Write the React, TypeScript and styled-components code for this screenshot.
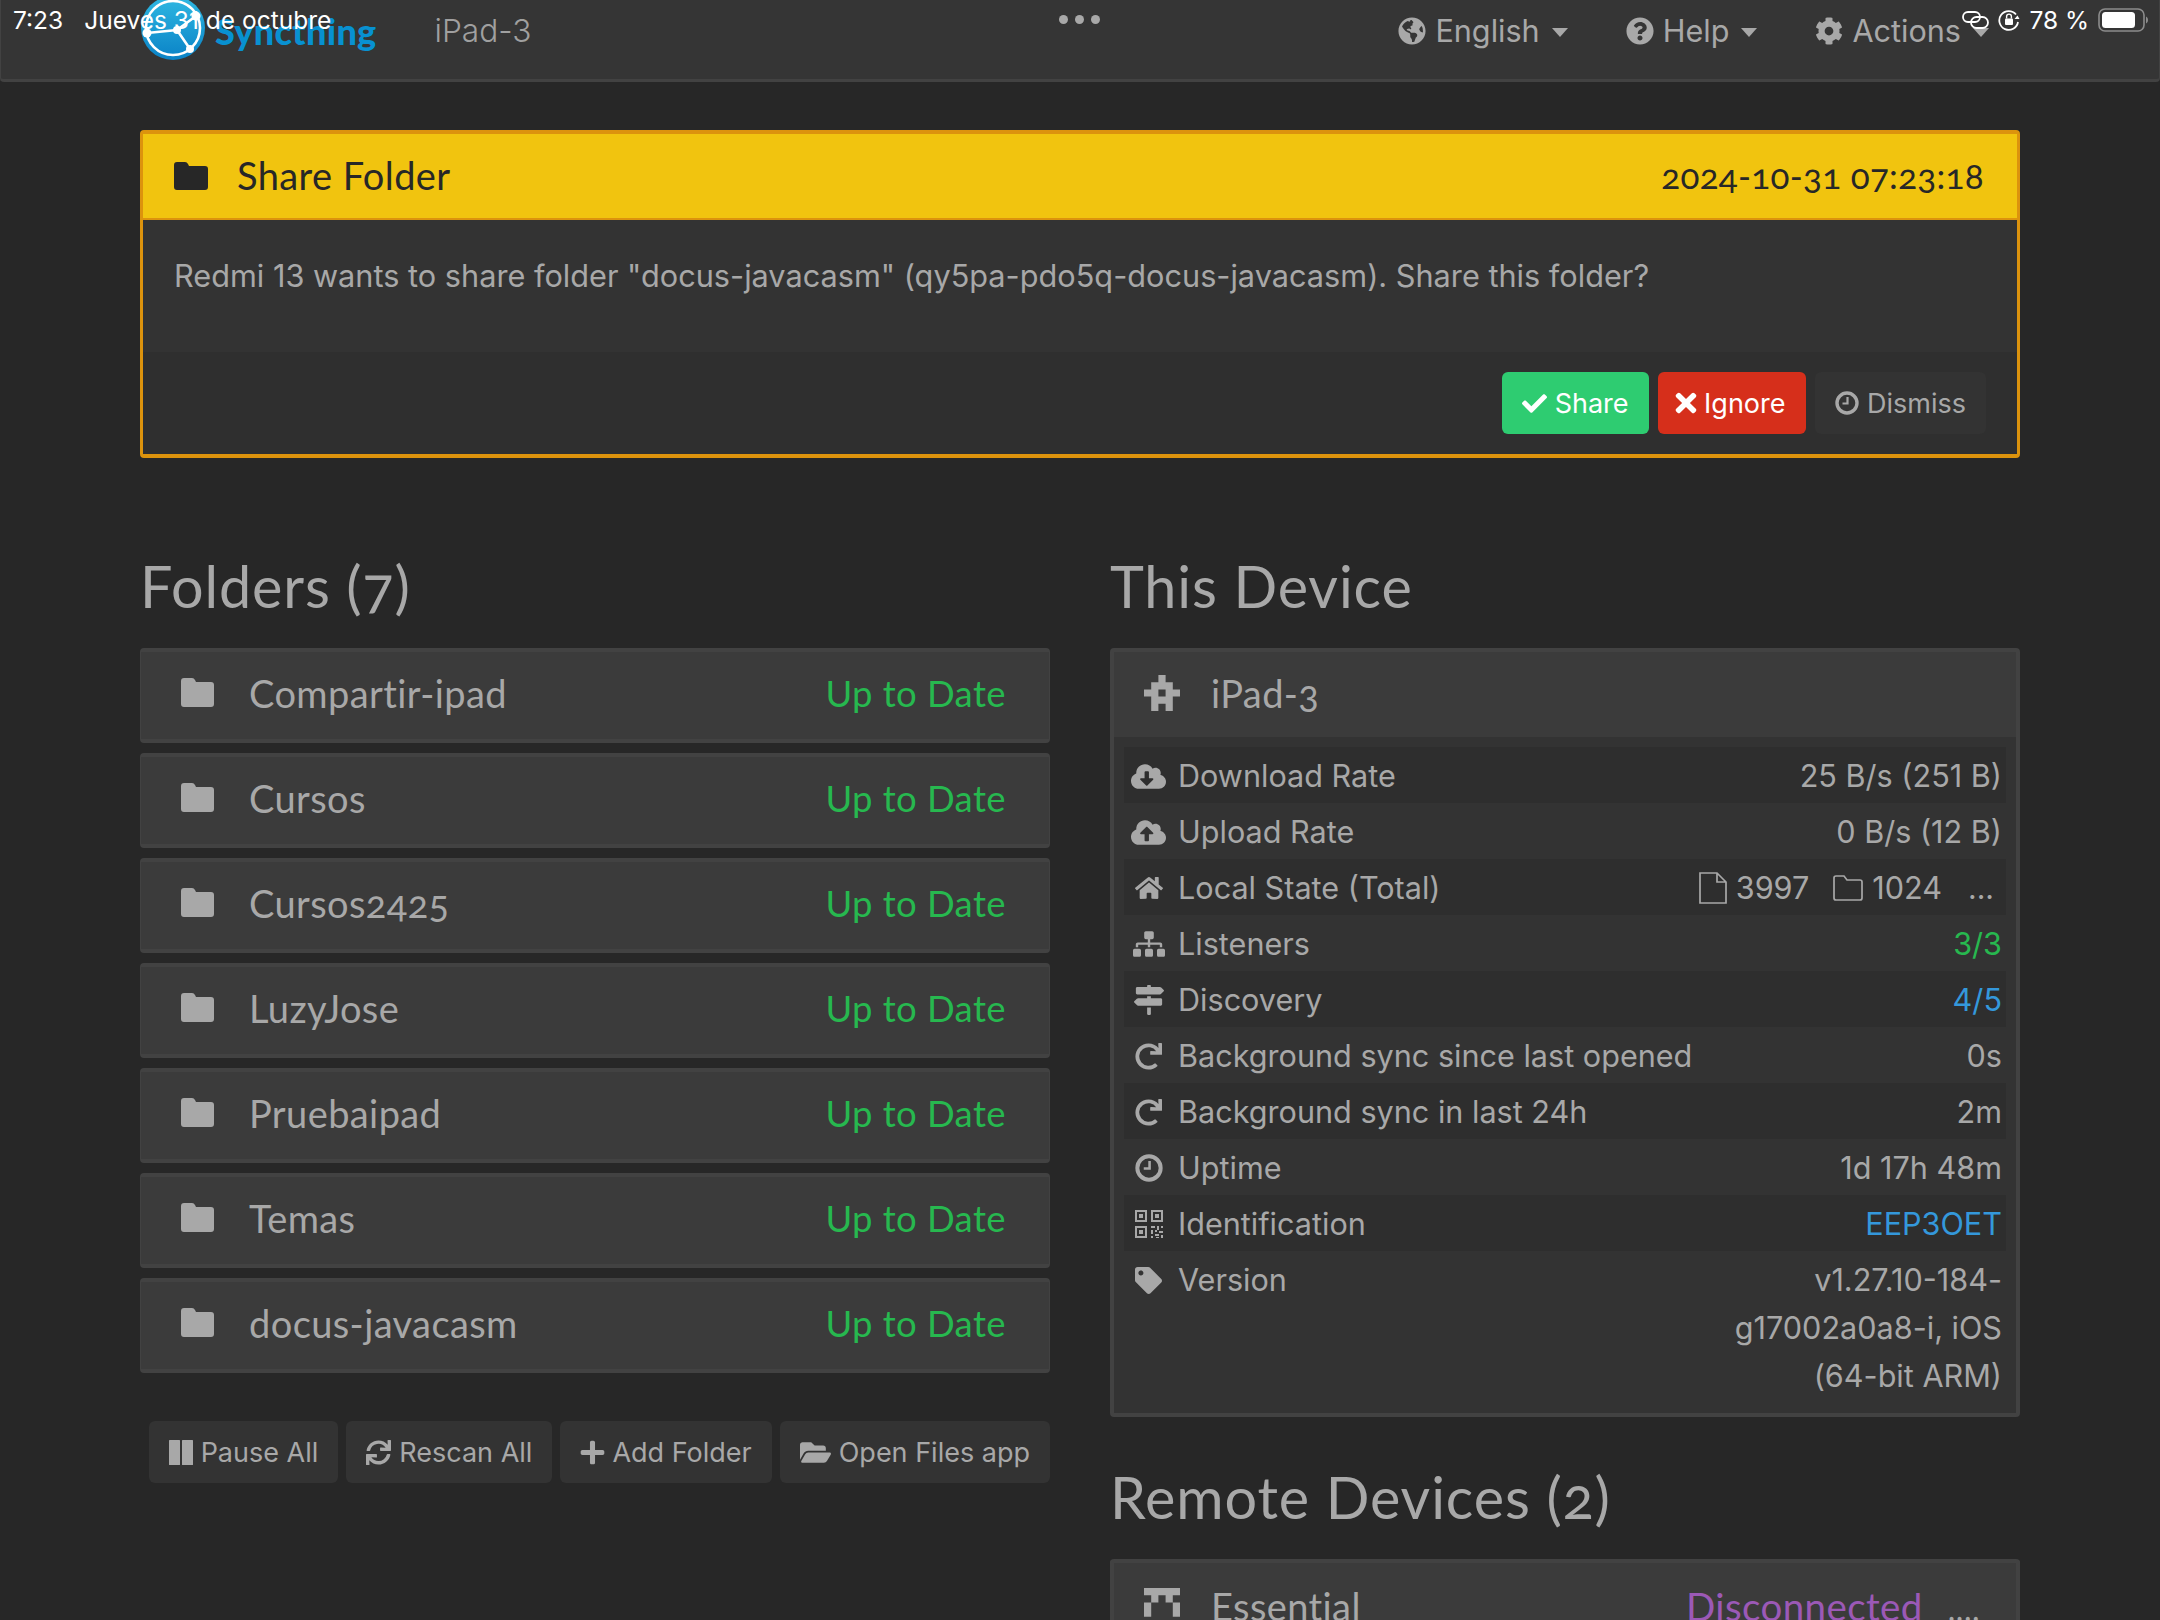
import styled, { createGlobalStyle } from "styled-components";
import {
  FaCheck,
  FaCloudDownloadAlt,
  FaCloudUploadAlt,
  FaCog,
  FaFolderOpen,
  FaGlobeAmericas,
  FaHome,
  FaMapSigns,
  FaPlus,
  FaQuestionCircle,
  FaRedo,
  FaSitemap,
  FaSync,
  FaTag,
  FaTimes,
} from "react-icons/fa";

const GlobalStyle = createGlobalStyle`
  html, body {
    margin: 0;
    padding: 0;
    height: 1620px;
    overflow: hidden;
    background: #272727;
  }
  * {
    box-sizing: border-box;
  }
`;

const Page = styled.div`
  position: relative;
  height: 1620px;
  overflow: hidden;
  background: #272727;
  color: #a8a8a8;
  font-family: Inter, "Liberation Sans", sans-serif;
`;

/* ---- iOS status bar, lies over the navbar ---- */
const StatusLeft = styled.div`
  position: absolute;
  top: 5px;
  left: 13px;
  display: flex;
  gap: 21px;
  color: #fff;
  font-size: 24.5px;
  line-height: 30px;
`;

const StatusRight = styled.div`
  position: absolute;
  top: 5px;
  right: 12px;
  display: flex;
  align-items: center;
  gap: 9px;
  color: #fff;
  font-size: 24.5px;
  line-height: 30px;
`;

const DotsRow = styled.div`
  position: absolute;
  top: 15px;
  left: 1059px;
  display: flex;
  gap: 7px;
`;

const Dot = styled.span`
  width: 9px;
  height: 9px;
  border-radius: 50%;
  background: #a8a8a8;
`;

/* ---- navbar ---- */
const Navbar = styled.nav`
  display: flex;
  align-items: flex-start;
  height: 82px;
  padding: 0 170px 0 140px;
  background: #353535;
  border: 1px solid #424242;
  border-top: 0;
  border-bottom-width: 3px;
  border-radius: 0 0 4px 4px;
`;

const Brand = styled.div`
  display: flex;
  align-items: center;
  height: 60px;
  flex: none;
`;

const LogoMark = styled.svg`
  flex: none;
  margin-top: -4px;
`;

const BrandName = styled.span`
  margin-left: 10px;
  margin-top: 1px;
  color: #0891d1;
  font-family: Lato, sans-serif;
  font-size: 36px;
  font-weight: 900;
  letter-spacing: 0.3px;
`;

const DeviceName = styled.span`
  margin: 11px 0 0 58px;
  font-size: 31.7px;
  line-height: 40px;
  color: #a0a0a0;
  font-weight: 300;
`;

const NavMenu = styled.div`
  display: flex;
  gap: 58px;
  margin-left: auto;
  margin-top: 11px;
`;

const NavItem = styled.span`
  display: flex;
  align-items: center;
  font-size: 30.6px;
  line-height: 40px;
  color: #a8a8a8;
  svg {
    font-size: 28px;
    margin-right: 9px;
  }
`;

const Caret = styled.span`
  width: 0;
  height: 0;
  margin-left: 12px;
  margin-top: 2px;
  border-top: 9px solid #a8a8a8;
  border-left: 8px solid transparent;
  border-right: 8px solid transparent;
`;

/* ---- share folder notification ---- */
const Content = styled.main`
  padding: 48px 140px 0;
`;

const Notice = styled.section`
  height: 328px;
  background: #333;
  border: 3px solid #dc930d;
  border-top-width: 4px;
  border-bottom-width: 4px;
  border-radius: 4px;
  display: flex;
  flex-direction: column;
`;

const NoticeHead = styled.header`
  display: flex;
  align-items: center;
  height: 86px;
  padding: 0 33px 2px 31px;
  background: #f1c40f;
  border-bottom: 2px solid #dc930d;
  color: #272727;
`;

const NoticeTitle = styled.h3`
  margin: 0 0 0 29px;
  font-family: Lato, sans-serif;
  font-size: 38px;
  font-weight: 400;
  letter-spacing: 0.4px;
`;

const NoticeTime = styled.span`
  margin-left: auto;
  font-family: Lato, sans-serif;
  font-size: 35px;
  letter-spacing: 0.3px;
  font-feature-settings: "onum";
`;

const NoticeBody = styled.p`
  flex: 1;
  margin: 0;
  padding: 34px 31px 0;
  font-size: 30.7px;
  line-height: 44px;
  color: #a8a8a8;
`;

const NoticeFoot = styled.footer`
  display: flex;
  justify-content: flex-end;
  gap: 9.5px;
  height: 102px;
  padding: 20px 31px 0;
  background: #2f2f2f;
`;

const Button = styled.button<{ $tone?: "share" | "ignore" | "plain" }>`
  display: inline-flex;
  align-items: center;
  gap: 8px;
  height: 62px;
  padding: 0 20px;
  border: 0;
  border-radius: 6px;
  font-family: inherit;
  font-size: 27px;
  background: ${({ $tone }) =>
    $tone === "share"
      ? "#2ecc71"
      : $tone === "ignore"
        ? "#d62f1b"
        : "#333"};
  color: ${({ $tone }) =>
    $tone === "share" || $tone === "ignore" ? "#fff" : "#a8a8a8"};
`;

const IgnoreIcon = styled(FaTimes)`
  margin: 0 -5px 0 -7px;
`;

const AddIcon = styled(FaPlus)`
  margin: 0 -2px 0 -1px;
`;

/* ---- the two columns ---- */
const Columns = styled.div`
  display: grid;
  grid-template-columns: 910px 910px;
  gap: 60px;
  margin-top: 98px;
`;

const Column = styled.div`
  display: flex;
  flex-direction: column;
`;

const Heading = styled.h1<{ $spaced?: boolean }>`
  margin: ${({ $spaced }) => ($spaced ? "50px 0 32px" : "0 0 32px")};
  font-family: Lato, sans-serif;
  font-size: 57.5px;
  font-weight: 400;
  line-height: 60px;
  color: #a8a8a8;
  letter-spacing: 0.9px;
  font-feature-settings: "onum";
`;

const FolderList = styled.div`
  display: flex;
  flex-direction: column;
  gap: 10px;
`;

const PanelHead = styled.div`
  display: flex;
  align-items: center;
  background: #3b3b3b;
  font-family: Lato, sans-serif;
  font-size: 38px;
  letter-spacing: 0.4px;
  font-feature-settings: "onum";
  color: #a8a8a8;
`;

const FolderRow = styled(PanelHead)`
  height: 95px;
  padding: 0 43px 6px 40px;
  border: 4px solid #424242;
  border-left-width: 1px;
  border-right-width: 1px;
  border-radius: 4px;
`;

const FolderGlyph = styled.svg`
  flex: none;
  fill: currentColor;
`;

const FolderIconSlot = styled.span`
  display: flex;
  width: 33px;
  margin-right: 35px;
`;

const NoticeTitleIcon = styled(FolderGlyph)`
  margin-top: 2px;
`;

const FolderStatus = styled.span`
  margin-left: auto;
  color: #27b84f;
  font-size: 36.5px;
  letter-spacing: 0.4px;
`;

const FolderActions = styled.div`
  display: flex;
  justify-content: flex-end;
  gap: 8px;
  margin-top: 48px;
`;

/* ---- this device ---- */
const DevicePanel = styled.section`
  display: flex;
  flex-direction: column;
  background: #333;
  border: 4px solid #424242;
  border-radius: 4px;
`;

const DeviceHead = styled(PanelHead)`
  height: 85px;
  padding: 0 36px 4px 30px;
`;

const RemotePanel = styled(DevicePanel)`
  border-bottom: 0;
`;

const RemoteHead = styled(DeviceHead)`
  height: 90px;
`;

const Identicon = styled.svg`
  width: 36px;
  height: 36px;
  margin-right: 31px;
  fill: #a8a8a8;
  flex: none;
`;

const StateTable = styled.div`
  padding: 10px;
`;

const StateRow = styled.div`
  display: flex;
  justify-content: space-between;
  align-items: flex-start;
  padding: 5px 4px 3px 7px;
  font-size: 30.6px;
  line-height: 48px;
  &:nth-child(odd) {
    background: #2e2e2e;
  }
`;

const StateLabel = styled.span`
  display: flex;
  align-items: center;
  white-space: nowrap;
`;

const StateIcon = styled.span`
  display: flex;
  justify-content: center;
  width: 35px;
  margin-right: 12px;
`;

const StateValue = styled.span<{ $color?: string }>`
  display: flex;
  align-items: center;
  max-width: 290px;
  text-align: right;
  color: ${({ $color }) => $color ?? "inherit"};
`;

const WideValue = styled.span`
  display: flex;
  align-items: center;
  white-space: nowrap;
`;

const CountGroup = styled.span`
  display: flex;
  align-items: center;
  gap: 9px;
  margin-right: 24px;
`;

const OutlineGlyph = styled.svg`
  flex: none;
  fill: none;
  stroke: currentColor;
  stroke-width: 1.7;
`;

const Ellipsis = styled.span`
  width: 34px;
  margin-left: 2px;
  font-size: 30px;
  text-align: left;
`;

const RemoteStatus = styled.span`
  margin-left: auto;
  color: #9b59b6;
  font-size: 38.5px;
`;

const RemoteExtra = styled.span`
  margin: 4px 0 0 25px;
  font-size: 32px;
  letter-spacing: 0.5px;
`;

const FolderShape = ({ width, height }: { width: number; height: number }) => (
  <path
    d={`M3 0 H11 Q13 0 14 2 L15 4 H${width - 3} Q${width} 4 ${width} 7 V${height - 3} Q${width} ${height} ${width - 3} ${height} H3 Q0 ${height} 0 ${height - 3} V3 Q0 0 3 0 Z`}
  />
);

const ClockIcon = ({ size }: { size: number }) => (
  <svg width={size} height={size} viewBox="0 0 24 24" fill="none" stroke="currentColor">
    <circle cx="12" cy="12" r="10" strokeWidth="3.4" />
    <path d="M12.5 6 V12.5 H7.5" strokeWidth="2.2" />
  </svg>
);

const QrIcon = ({ size }: { size: number }) => (
  <svg width={size} height={size} viewBox="0 0 28 28" fill="currentColor">
    <path
      fillRule="evenodd"
      d="M0 0h12v12H0z M2 2v8h8V2z M4 4h4v4H4z M16 0h12v12H16z M18 2v8h8V2z M20 4h4v4h-4z M0 16h12v12H0z M2 18v8h8v-8z M4 20h4v4H4z"
    />
    <path d="M16 16h4v2h-4z M22 16h2v4h-2z M26 16h2v2h-2z M16 20h2v4h-2z M20 20h2v2h-2z M24 21h4v2h-4z M20 24h4v2h-4z M16 26h2v2h-2z M26 25h2v3h-2z M21 27h3v1h-3z" />
  </svg>
);

const PauseIcon = () => (
  <svg width="24" height="25" viewBox="0 0 24 25" fill="currentColor">
    <rect x="0" y="0" width="11" height="25" rx="0.5" />
    <rect x="13" y="0" width="11" height="25" rx="0.5" />
  </svg>
);

const folders = [
  "Compartir-ipad",
  "Cursos",
  "Cursos2425",
  "LuzyJose",
  "Pruebaipad",
  "Temas",
  "docus-javacasm",
];

const stateRows = [
  { icon: <FaCloudDownloadAlt size={35} />, label: "Download Rate", value: "25 B/s (251 B)" },
  { icon: <FaCloudUploadAlt size={35} />, label: "Upload Rate", value: "0 B/s (12 B)" },
  { icon: <FaHome size={28} />, label: "Local State (Total)", local: true },
  { icon: <FaSitemap size={32} />, label: "Listeners", value: "3/3", color: "#27b84f" },
  { icon: <FaMapSigns size={30} />, label: "Discovery", value: "4/5", color: "#3498db" },
  { icon: <FaRedo size={27} />, label: "Background sync since last opened", value: "0s" },
  { icon: <FaRedo size={27} />, label: "Background sync in last 24h", value: "2m" },
  { icon: <ClockIcon size={28} />, label: "Uptime", value: "1d 17h 48m" },
  { icon: <QrIcon size={28} />, label: "Identification", value: "EEP3OET", color: "#3498db" },
  { icon: <FaTag size={27} />, label: "Version", value: "v1.27.10-184-g17002a0a8-i, iOS (64-bit ARM)" },
];

const Logo = () => (
  <LogoMark width="64" height="64" viewBox="0 0 64 64">
    <defs>
      <linearGradient id="logoFill" x1="0" y1="0" x2="0" y2="1">
        <stop offset="0" stopColor="#2fb8e2" />
        <stop offset="1" stopColor="#0a82c6" />
      </linearGradient>
    </defs>
    <circle cx="32" cy="32" r="32" fill="url(#logoFill)" />
    <circle cx="32" cy="32" r="27" fill="none" stroke="#fff" strokeWidth="2.6" />
    <path
      d="M6 37 L36 34 L55 20 M36 34 L49 53"
      fill="none"
      stroke="#fff"
      strokeWidth="2.6"
    />
    <g fill="#fff">
      <circle cx="6" cy="37" r="4.5" />
      <circle cx="36" cy="34" r="4" />
      <circle cx="55" cy="20" r="4.5" />
      <circle cx="49" cy="53" r="4" />
    </g>
  </LogoMark>
);

const LinkIcon = () => (
  <svg width="27" height="18" viewBox="0 0 27 18" fill="none" stroke="#fff" strokeWidth="1.8">
    <rect x="1" y="1" width="17" height="10" rx="5" />
    <rect x="9" y="6" width="17" height="11" rx="5.5" />
  </svg>
);

const RotationLockIcon = () => (
  <svg width="22" height="22" viewBox="0 0 22 22" fill="none">
    <path d="M18 5.5 A9.4 9.4 0 1 0 20 13" stroke="#fff" strokeWidth="1.8" />
    <path d="M16.5 10 L21.5 10 L19.5 6.5 Z" fill="#fff" />
    <rect x="7" y="9.5" width="8" height="6.5" rx="1" fill="#fff" />
    <path d="M8.6 9.5 V7.5 A2.4 2.4 0 0 1 13.4 7.5 V9.5" stroke="#fff" strokeWidth="1.4" />
  </svg>
);

const BatteryIcon = () => (
  <svg width="50" height="24" viewBox="0 0 50 24">
    <rect x="1" y="1" width="45" height="22" rx="6" fill="none" stroke="#8c8c8c" strokeWidth="1.6" />
    <rect x="4" y="4" width="33" height="16" rx="3.5" fill="#fff" />
    <path d="M48 8.5 C49.5 9.5 50 10.5 50 12 C50 13.5 49.5 14.5 48 15.5 Z" fill="#8c8c8c" />
  </svg>
);

const App = () => {
  return (
    <Page>
      <GlobalStyle />
      <Navbar>
        <Brand>
          <Logo />
          <BrandName>Syncthing</BrandName>
        </Brand>
        <DeviceName>iPad-3</DeviceName>
        <NavMenu>
          <NavItem>
            <FaGlobeAmericas />
            English
            <Caret />
          </NavItem>
          <NavItem>
            <FaQuestionCircle />
            Help
            <Caret />
          </NavItem>
          <NavItem>
            <FaCog />
            Actions
            <Caret />
          </NavItem>
        </NavMenu>
      </Navbar>

      <StatusLeft>
        <span>7:23</span>
        <span>Jueves 31 de octubre</span>
      </StatusLeft>
      <DotsRow>
        <Dot />
        <Dot />
        <Dot />
      </DotsRow>
      <StatusRight>
        <LinkIcon />
        <RotationLockIcon />
        <span>78 %</span>
        <BatteryIcon />
      </StatusRight>

      <Content>
        <Notice>
          <NoticeHead>
            <NoticeTitleIcon width="34" height="28" viewBox="0 0 34 28">
              <FolderShape width={34} height={28} />
            </NoticeTitleIcon>
            <NoticeTitle>Share Folder</NoticeTitle>
            <NoticeTime>2024-10-31 07:23:18</NoticeTime>
          </NoticeHead>
          <NoticeBody>
            Redmi 13 wants to share folder "docus-javacasm" (qy5pa-pdo5q-docus-javacasm). Share
            this folder?
          </NoticeBody>
          <NoticeFoot>
            <Button $tone="share">
              <FaCheck size={25} />
              Share
            </Button>
            <Button $tone="ignore">
              <IgnoreIcon size={30} />
              Ignore
            </Button>
            <Button $tone="plain">
              <ClockIcon size={24} />
              Dismiss
            </Button>
          </NoticeFoot>
        </Notice>

        <Columns>
          <Column>
            <Heading>Folders (7)</Heading>
            <FolderList>
              {folders.map((name) => (
                <FolderRow key={name}>
                  <FolderIconSlot>
                    <FolderGlyph width="33" height="29" viewBox="0 0 33 29">
                      <FolderShape width={33} height={29} />
                    </FolderGlyph>
                  </FolderIconSlot>
                  {name}
                  <FolderStatus>Up to Date</FolderStatus>
                </FolderRow>
              ))}
            </FolderList>
            <FolderActions>
              <Button>
                <PauseIcon />
                Pause All
              </Button>
              <Button>
                <FaSync size={25} />
                Rescan All
              </Button>
              <Button>
                <AddIcon size={27} />
                Add Folder
              </Button>
              <Button>
                <FaFolderOpen size={31} />
                Open Files app
              </Button>
            </FolderActions>
          </Column>

          <Column>
            <Heading>This Device</Heading>
            <DevicePanel>
              <DeviceHead>
                <Identicon viewBox="0 0 5 5">
                  <path d="M2 0h1v1h1v1h1v1h-1v2h-1v-1h-1v1h-1v-2h-1v-1h1v-1h1z M2 2v1h1v-1z" fillRule="evenodd" />
                </Identicon>
                iPad-3
              </DeviceHead>
              <StateTable>
                {stateRows.map((row) => (
                  <StateRow key={row.label}>
                    <StateLabel>
                      <StateIcon>{row.icon}</StateIcon>
                      {row.label}
                    </StateLabel>
                    {row.local ? (
                      <WideValue>
                        <CountGroup>
                          <OutlineGlyph width="28" height="32" viewBox="0 0 28 32">
                            <path d="M1 1 H18 L27 10 V31 H1 Z M18 1 V10 H27" />
                          </OutlineGlyph>
                          3997
                        </CountGroup>
                        <CountGroup>
                          <OutlineGlyph width="30" height="26" viewBox="0 0 30 26">
                            <path d="M3 1 H11 L14 5 H27 Q29 5 29 7 V23 Q29 25 27 25 H3 Q1 25 1 23 V3 Q1 1 3 1 Z" />
                          </OutlineGlyph>
                          1024
                        </CountGroup>
                        <Ellipsis>...</Ellipsis>
                      </WideValue>
                    ) : (
                      <StateValue $color={row.color}>{row.value}</StateValue>
                    )}
                  </StateRow>
                ))}
              </StateTable>
            </DevicePanel>

            <Heading $spaced>Remote Devices (2)</Heading>
            <RemotePanel>
              <RemoteHead>
                <Identicon viewBox="0 0 5 5">
                  <path d="M0 0h5v1h-5z M1 1h1v1h-1z M3 1h1v1h-1z M0 2h1v2h-1z M4 2h1v2h-1z" />
                </Identicon>
                Essential
                <RemoteStatus>Disconnected</RemoteStatus>
                <RemoteExtra>....</RemoteExtra>
              </RemoteHead>
            </RemotePanel>
          </Column>
        </Columns>
      </Content>
    </Page>
  );
};

export default App;
